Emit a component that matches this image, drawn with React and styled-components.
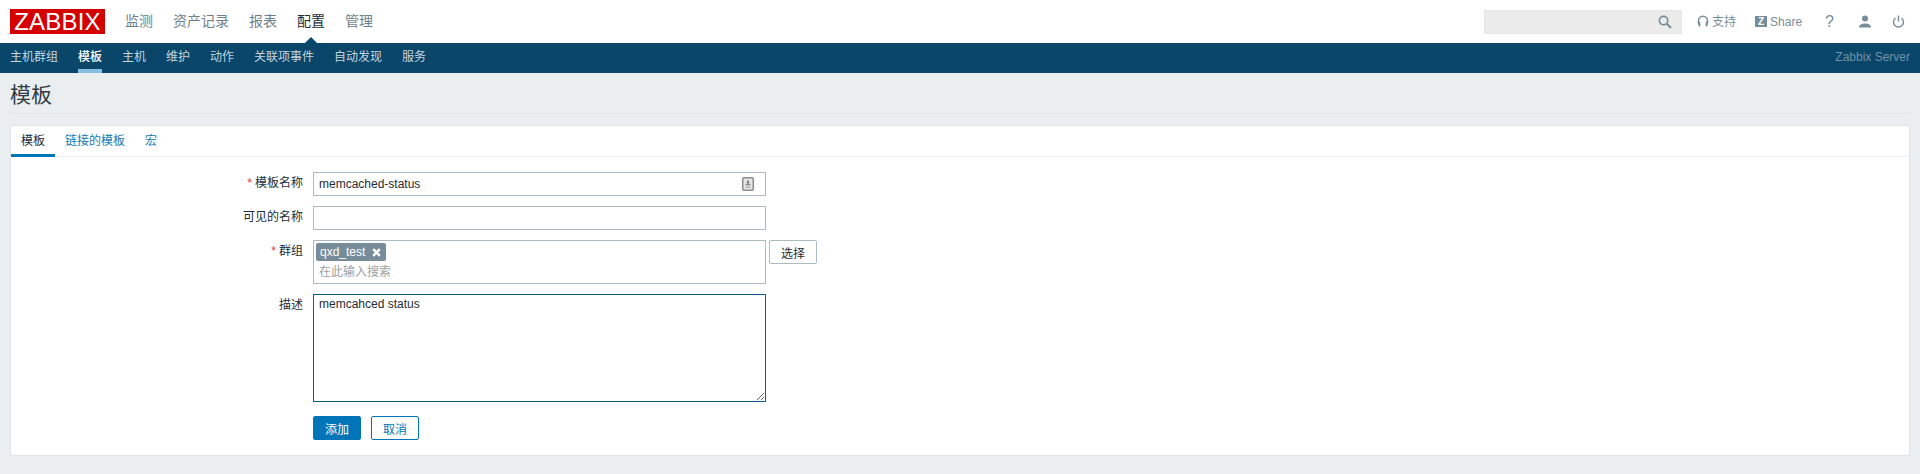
import React from "react";
import styled, { createGlobalStyle } from "styled-components";

const Global = createGlobalStyle`
  html, body { margin: 0; padding: 0; background: #ebeef0; }
  body { font-family: "Liberation Sans", "Noto Sans CJK SC", sans-serif; font-size: 12px; color: #1f2c33; }
  * { box-sizing: border-box; }
`;
const Page = styled.div`height: 474px; overflow: hidden; background: #ebeef0;`;
const TopBar = styled.header`height: 43px; background: #fff; display: flex; align-items: center; padding: 0 10px;`;
const Logo = styled.div`
  width: 95px; height: 25px; background: #d40000; color: #fff; font-size: 24px; line-height: 26px;
  text-align: center; letter-spacing: 0.2px; overflow: hidden; margin-top: -1px;
`;
const MainNav = styled.nav`display: flex; gap: 20px; margin-left: 20px; margin-top: -2px;`;
const MainItem = styled.a`
  font-size: 14px; line-height: 20px; color: ${p => (p.$active ? "#1f2c33" : "#6f7f88")}; position: relative;
  ${p => p.$active && `&::after { content: ""; position: absolute; left: 6px; top: 26px; border: 8px solid transparent; border-top: 0; border-bottom-color: #0a466a; }`}
`;
const RightArea = styled.div`margin-left: auto; display: flex; align-items: center; height: 24px;`;
const Search = styled.div`
  width: 198px; height: 24px; background: #ebebeb; border: 1px solid #e6e6e6; display: flex; align-items: center;
  justify-content: flex-end; padding-right: 9px; margin-right: 15px;
`;
const Tool = styled.a`display: flex; align-items: center; color: #768d99; font-size: 12px; line-height: 16px; margin: ${p => p.$m || "0"};`;
const Help = styled.span`color: #768d99; font-size: 16px; line-height: 20px;`;
const ZBadge = styled.span`
  width: 12px; height: 11px; background: #768d99; color: #fff; font-size: 10px; font-weight: 700; line-height: 11px;
  text-align: center; margin-right: 3px;
`;
const SubBar = styled.div`height: 30px; background: #0a466a; display: flex; align-items: stretch; padding: 0 10px;`;
const SubNav = styled.nav`display: flex; gap: 20px;`;
const SubItem = styled.a`
  font-size: 12px; line-height: 28px; color: ${p => (p.$active ? "#fff" : "#c4d5df")};
  border-bottom: 4px solid ${p => (p.$active ? "#85bfe0" : "transparent")}; height: 30px; padding-bottom: 0;
  font-weight: ${p => (p.$active ? 500 : 400)};
`;
const ServerName = styled.span`margin-left: auto; color: #6f93a9; line-height: 28px; font-size: 12px;`;
const Content = styled.main`padding: 0 10px;`;
const TitleRow = styled.div`height: 41px; padding-top: 2px; border-bottom: 1px solid #dfe4e7; margin-bottom: 11px;`;
const Title = styled.h1`margin: 0; font-size: 21px; font-weight: 400; line-height: 40px; color: #2f3b42;`;
const Panel = styled.section`height: 331px; background: #fff; border: 1px solid #dfe4e7;`;
const Tabs = styled.div`height: 31px; display: flex; border-bottom: 1px solid #ebeef0;`;
const Tab = styled.a`
  padding: 0 10px; line-height: 31px; height: 31px; font-size: 12px; color: ${p => (p.$active ? "#1f2c33" : "#1b78b0")};
  border-bottom: 3px solid ${p => (p.$active ? "#0275b8" : "transparent")};
`;
const Form = styled.form`
  display: grid; grid-template-columns: 292px 453px 1fr; column-gap: 10px; row-gap: 10px; padding-top: 15px; align-items: start;
`;
const Label = styled.label`grid-column: 1; text-align: right; line-height: 20px; padding-top: 1px; font-size: 12px; color: #1f2c33;`;
const Star = styled.span`color: #e33734; margin-right: 3px;`;
const InputWrap = styled.div`position: relative; grid-column: 2; height: 24px;`;
const TextInput = styled.input`
  display: block; width: 100%; height: 24px; border: 1px solid #acbbc2; padding: 0 5px; font: inherit; font-size: 12px; color: #1f2c33; background: #fff; outline: none;
`;
const KeyIcon = styled.svg`position: absolute; right: 12px; top: 5px;`;
const GroupBox = styled.div`
  grid-column: 2; height: 44px; border: 1px solid #acbbc2; padding: 2px;
`;
const TagChip = styled.span`
  display: inline-flex; align-items: center; height: 18px; width: 70px; padding-left: 4px; background: #768d99; color: #fff;
  border-radius: 2px; font-size: 12px; line-height: 18px;
`;
const TagX = styled.svg`margin-left: 7px;`;
const Hint = styled.div`color: #a0a0a0; line-height: 20px; margin: 1px 0 0 3px; font-size: 12px;`;
const SelectBtn = styled.button`
  grid-column: 3; margin-left: -7px; width: 48px; height: 24px; font: inherit; font-size: 12px; background: #fff; color: #1f2c33; border: 1px solid #acbbc2; border-radius: 2px; padding: 0;
`;
const Desc = styled.textarea`
  grid-column: 2; width: 453px; height: 108px; border: 1px solid #0a5c8c; padding: 2px 5px; font: inherit; font-size: 12px; color: #1f2c33; outline: none; display: block; margin: 0;
`;
const Actions = styled.div`grid-column: 2; display: flex; gap: 10px; padding-top: 4px;`;
const Btn = styled.button`
  width: 48px; height: 24px; font: inherit; font-size: 12px; border-radius: 2px; padding: 0; border: 1px solid #0275b8;
  background: ${p => (p.$primary ? "#0275b8" : "#fff")}; color: ${p => (p.$primary ? "#fff" : "#0275b8")};
`;

export default function App() {
  return (
    <Page>
      <Global />
      <TopBar>
        <Logo>ZABBIX</Logo>
        <MainNav>
          <MainItem>监测</MainItem>
          <MainItem>资产记录</MainItem>
          <MainItem>报表</MainItem>
          <MainItem $active>配置</MainItem>
          <MainItem>管理</MainItem>
        </MainNav>
        <RightArea>
          <Search>
            <svg width="14" height="14" viewBox="0 0 14 14" fill="none" stroke="#768d99" strokeWidth="1.6"><circle cx="5.6" cy="5.6" r="4.2"/><path d="M8.8 8.8L13 13" strokeWidth="2"/></svg>
          </Search>
          <Tool>
            <svg width="12" height="13" viewBox="0 0 12 13" fill="none" stroke="#768d99" strokeWidth="1.5" style={{marginRight: 3}}><path d="M1.5 8V5.8a4.5 4.5 0 0 1 9 0V8"/><path d="M1.2 7.2h1.6v4H2.2zM10.8 7.2H9.2v4h.6z" fill="#768d99" strokeWidth="1"/></svg>
            支持
          </Tool>
          <Tool $m="0 0 0 19px"><ZBadge>Z</ZBadge>Share</Tool>
          <Tool $m="0 0 0 23px"><Help>?</Help></Tool>
          <Tool $m="0 0 0 24px">
            <svg width="14" height="13" viewBox="0 0 14 13" fill="#768d99"><circle cx="7" cy="3.6" r="3"/><path d="M1 12.5c0-3 3-4 6-4s6 1 6 4z"/></svg>
          </Tool>
          <Tool $m="0 5px 0 20px">
            <svg width="13" height="13" viewBox="0 0 13 13" fill="none" stroke="#768d99" strokeWidth="1.4"><path d="M3.6 3a5 5 0 1 0 5.8 0"/><path d="M6.5 0.5V6.5"/></svg>
          </Tool>
        </RightArea>
      </TopBar>
      <SubBar>
        <SubNav>
          <SubItem>主机群组</SubItem>
          <SubItem $active>模板</SubItem>
          <SubItem>主机</SubItem>
          <SubItem>维护</SubItem>
          <SubItem>动作</SubItem>
          <SubItem>关联项事件</SubItem>
          <SubItem>自动发现</SubItem>
          <SubItem>服务</SubItem>
        </SubNav>
        <ServerName>Zabbix Server</ServerName>
      </SubBar>
      <Content>
        <TitleRow><Title>模板</Title></TitleRow>
        <Panel>
          <Tabs>
            <Tab $active>模板</Tab>
            <Tab>链接的模板</Tab>
            <Tab>宏</Tab>
          </Tabs>
          <Form onSubmit={e => e.preventDefault()}>
            <Label><Star>*</Star>模板名称</Label>
            <InputWrap>
              <TextInput defaultValue="memcached-status" />
              <KeyIcon width="12" height="14" viewBox="0 0 12 14">
                <rect x="0.75" y="0.75" width="10.5" height="12.5" rx="1" fill="#e6e6e6" stroke="#8c8c8c" strokeWidth="1.5"/>
                <path d="M6 2.5l1.5 4h-3z" fill="#6e6e6e"/><rect x="3.5" y="7" width="5" height="1.3" fill="#8c8c8c"/><rect x="3.5" y="9.5" width="5" height="1.3" fill="#b0b0b0"/>
              </KeyIcon>
            </InputWrap>
            <Label>可见的名称</Label>
            <InputWrap><TextInput /></InputWrap>
            <Label><Star>*</Star>群组</Label>
            <GroupBox>
              <TagChip>qxd_test
                <TagX width="9" height="9" viewBox="0 0 9 9" stroke="#fff" strokeWidth="2.4"><path d="M1.2 1.2l6.6 6.6M7.8 1.2L1.2 7.8"/></TagX>
              </TagChip>
              <Hint>在此输入搜索</Hint>
            </GroupBox>
            <SelectBtn type="button">选择</SelectBtn>
            <Label>描述</Label>
            <Desc defaultValue="memcahced status" />
            <Actions>
              <Btn type="button" $primary>添加</Btn>
              <Btn type="button">取消</Btn>
            </Actions>
          </Form>
        </Panel>
      </Content>
    </Page>
  );
}
